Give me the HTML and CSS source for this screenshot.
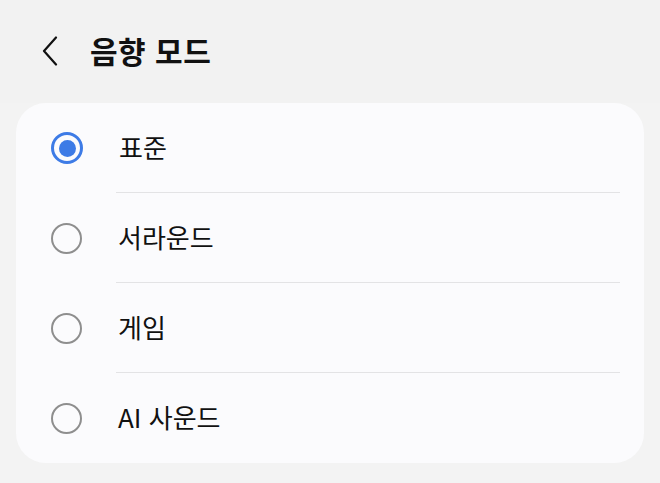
FILE: index.html
```html
<!DOCTYPE html>
<html lang="ko">
<head>
<meta charset="utf-8">
<link rel="stylesheet" href="styles.css">
</head>
<body>
<header class="header">
  <svg class="back" width="16" height="30" viewBox="0 0 16 30"><path d="M14 1.5 L2 15 L14 28.5" fill="none" stroke="#111" stroke-width="2.2" stroke-linecap="round" stroke-linejoin="round"/></svg>
  <h1 class="title">음향 모드</h1>
</header>
<main class="card">
  <div class="row"><span class="radio checked"></span><span class="label">표준</span></div>
  <div class="row"><span class="radio"></span><span class="label">서라운드</span></div>
  <div class="row"><span class="radio"></span><span class="label">게임</span></div>
  <div class="row last"><span class="radio"></span><span class="label">AI 사운드</span></div>
</main>
</body>
</html>
```
FILE: styles.css
```css
html, body {
  margin: 0;
  padding: 0;
  background: #f3f3f3;
  font-family: "Noto Sans CJK KR", "Noto Sans", sans-serif;
  color: #111;
}
body {
  width: 660px;
  height: 483px;
  overflow: hidden;
}
.header {
  height: 103px;
  background: #f2f2f2;
  display: flex;
  align-items: center;
  padding-left: 42px;
  box-sizing: border-box;
}
.back {
  display: block;
  margin-top: -2px;
}
.title {
  margin: -3px 0 0 32px;
  font-size: 30px;
  font-weight: 700;
  letter-spacing: 0.5px;
  line-height: 1;
}
.card {
  margin: 0 16px;
  background: #fbfbfd;
  border-radius: 30px;
  height: 360px;
  display: flex;
  flex-direction: column;
}
.row {
  height: 90px;
  display: flex;
  align-items: center;
  position: relative;
  flex: none;
}
.row::after {
  content: "";
  position: absolute;
  left: 100px;
  right: 24px;
  bottom: 0;
  height: 1px;
  background: #e3e3e5;
}
.row.last::after {
  display: none;
}
.radio {
  width: 27px;
  height: 27px;
  border: 2.5px solid #8e8e8e;
  border-radius: 50%;
  margin-left: 35px;
  box-sizing: content-box;
  flex: none;
  position: relative;
}
.radio.checked {
  width: 26px;
  height: 26px;
  border: 3px solid #3d7be6;
}
.radio.checked::after {
  content: "";
  position: absolute;
  left: 50%;
  top: 50%;
  width: 17px;
  height: 17px;
  margin: -8.5px 0 0 -8.5px;
  border-radius: 50%;
  background: #3d7be6;
}
.label {
  margin-left: 36px;
  font-size: 26px;
  line-height: 1;
  margin-top: -2px;
}
```
